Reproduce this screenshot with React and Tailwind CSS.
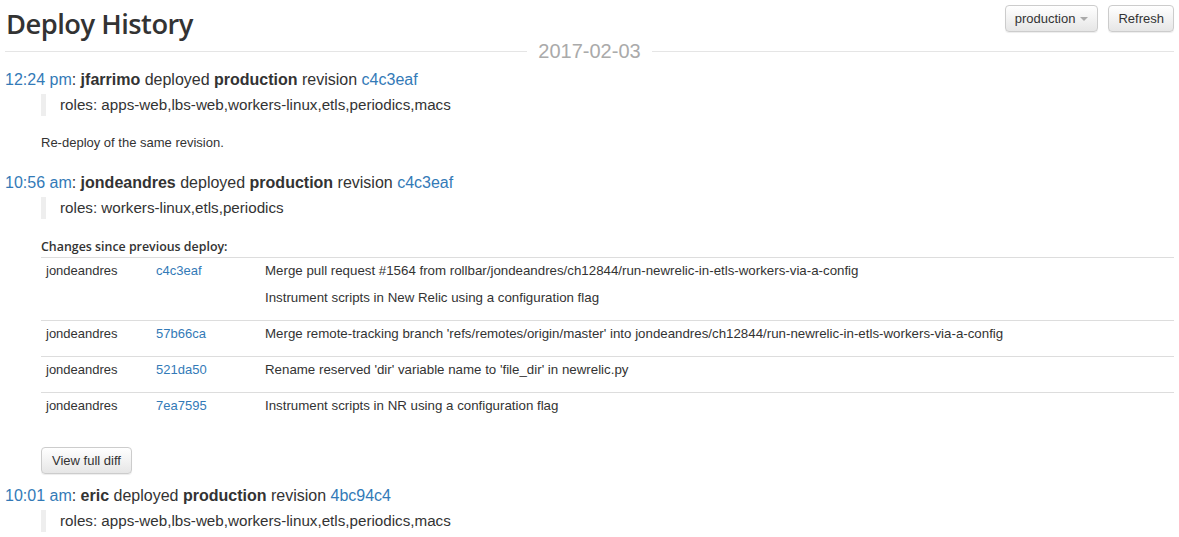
import React from "react";

const link = "text-[#337ab7]";

function Heading({ time, user, sha }) {
  return (
    <div className="text-[16px] leading-[22px] text-[#333]">
      <a className={link}>{time}</a>: <b>{user}</b> deployed <b>production</b> revision{" "}
      <a className={link}>{sha}</a>
    </div>
  );
}

function Roles({ text }) {
  return (
    <div className="ml-[36px] mt-[3px] border-l-[5px] border-[#eee] pl-[14px] text-[15.2px] leading-[22px] font-light text-[#333]">
      roles: {text}
    </div>
  );
}

function Btn({ children, className = "" }) {
  return (
    <button
      className={
        "h-[27px] rounded-[4px] border border-[#ccc] bg-gradient-to-b from-white to-[#e6e6e6] px-[9px] text-[13px] leading-[25px] text-[#333] shadow-[inset_0_1px_0_rgba(255,255,255,0.15),0_1px_1px_rgba(0,0,0,0.075)] " +
        className
      }
    >
      {children}
    </button>
  );
}

const commits = [
  {
    sha: "c4c3eaf",
    msgs: [
      "Merge pull request #1564 from rollbar/jondeandres/ch12844/run-newrelic-in-etls-workers-via-a-config",
      "Instrument scripts in New Relic using a configuration flag",
    ],
  },
  {
    sha: "57b66ca",
    msgs: [
      "Merge remote-tracking branch 'refs/remotes/origin/master' into jondeandres/ch12844/run-newrelic-in-etls-workers-via-a-config",
    ],
  },
  { sha: "521da50", msgs: ["Rename reserved 'dir' variable name to 'file_dir' in newrelic.py"] },
  { sha: "7ea7595", msgs: ["Instrument scripts in NR using a configuration flag"] },
];

export default function App() {
  return (
    <div
      className="w-[1179px] h-[537px] overflow-hidden bg-white px-[5px] text-[#333]"
      style={{ fontFamily: '"Liberation Sans", Arial, sans-serif' }}
    >
      <div className="flex h-[41px] items-start justify-between pt-[5px]">
        <h1
          className="pl-[1px] pt-[2px] text-[27.3px] leading-[34px] font-semibold tracking-[-0.5px] text-[#333]"
          style={{ fontFamily: '"Open Sans", sans-serif' }}
        >
          Deploy History
        </h1>
        <div className="flex gap-[10px] pr-[0px]">
          <Btn className="flex items-center gap-[5px]">
            production
            <span className="inline-block h-0 w-0 border-x-[4px] border-t-[4px] border-x-transparent border-t-[#aaa]" />
          </Btn>
          <Btn>Refresh</Btn>
        </div>
      </div>

      <div className="flex h-[20px] items-center">
        <div className="h-px flex-1 bg-[#e5e5e5]" />
        <div className="px-[11px] text-[20px] leading-[20px] text-[#aaa]">2017-02-03</div>
        <div className="h-px flex-1 bg-[#e5e5e5]" />
      </div>

      <div className="mt-[8px]">
        <Heading time="12:24 pm" user="jfarrimo" sha="c4c3eaf" />
        <Roles text="apps-web,lbs-web,workers-linux,etls,periodics,macs" />
        <p className="ml-[36px] mt-[18px] text-[13px] leading-[18px]">Re-deploy of the same revision.</p>
      </div>

      <div className="mt-[20px]">
        <Heading time="10:56 am" user="jondeandres" sha="c4c3eaf" />
        <Roles text="workers-linux,etls,periodics" />
        <div className="ml-[36px] mt-[18px]">
          <div
            className="text-[12.4px] leading-[20px] font-semibold text-[#333]"
            style={{ fontFamily: '"Open Sans", sans-serif' }}
          >
            Changes since previous deploy:
          </div>
          <table className="w-full border-collapse text-[13px] leading-[18px]">
            <tbody>
              {commits.map((c) => (
                <tr key={c.sha} className="border-t border-[#ddd] align-top">
                  <td className="w-[110px] px-[5px] pt-[4px] pb-[4px]">jondeandres</td>
                  <td className="w-[109px] px-[5px] pt-[4px] pb-[4px]">
                    <a className={link}>{c.sha}</a>
                  </td>
                  <td className="px-[5px] pt-[4px] pb-[4px] text-[13.3px]">
                    {c.msgs.map((m) => (
                      <p key={m} className="mb-[9px]">
                        {m}
                      </p>
                    ))}
                  </td>
                </tr>
              ))}
            </tbody>
          </table>
          <div className="mt-[19px]">
            <Btn className="px-[10px]">View full diff</Btn>
          </div>
        </div>
      </div>

      <div className="mt-[11px]">
        <Heading time="10:01 am" user="eric" sha="4bc94c4" />
        <Roles text="apps-web,lbs-web,workers-linux,etls,periodics,macs" />
      </div>
    </div>
  );
}
